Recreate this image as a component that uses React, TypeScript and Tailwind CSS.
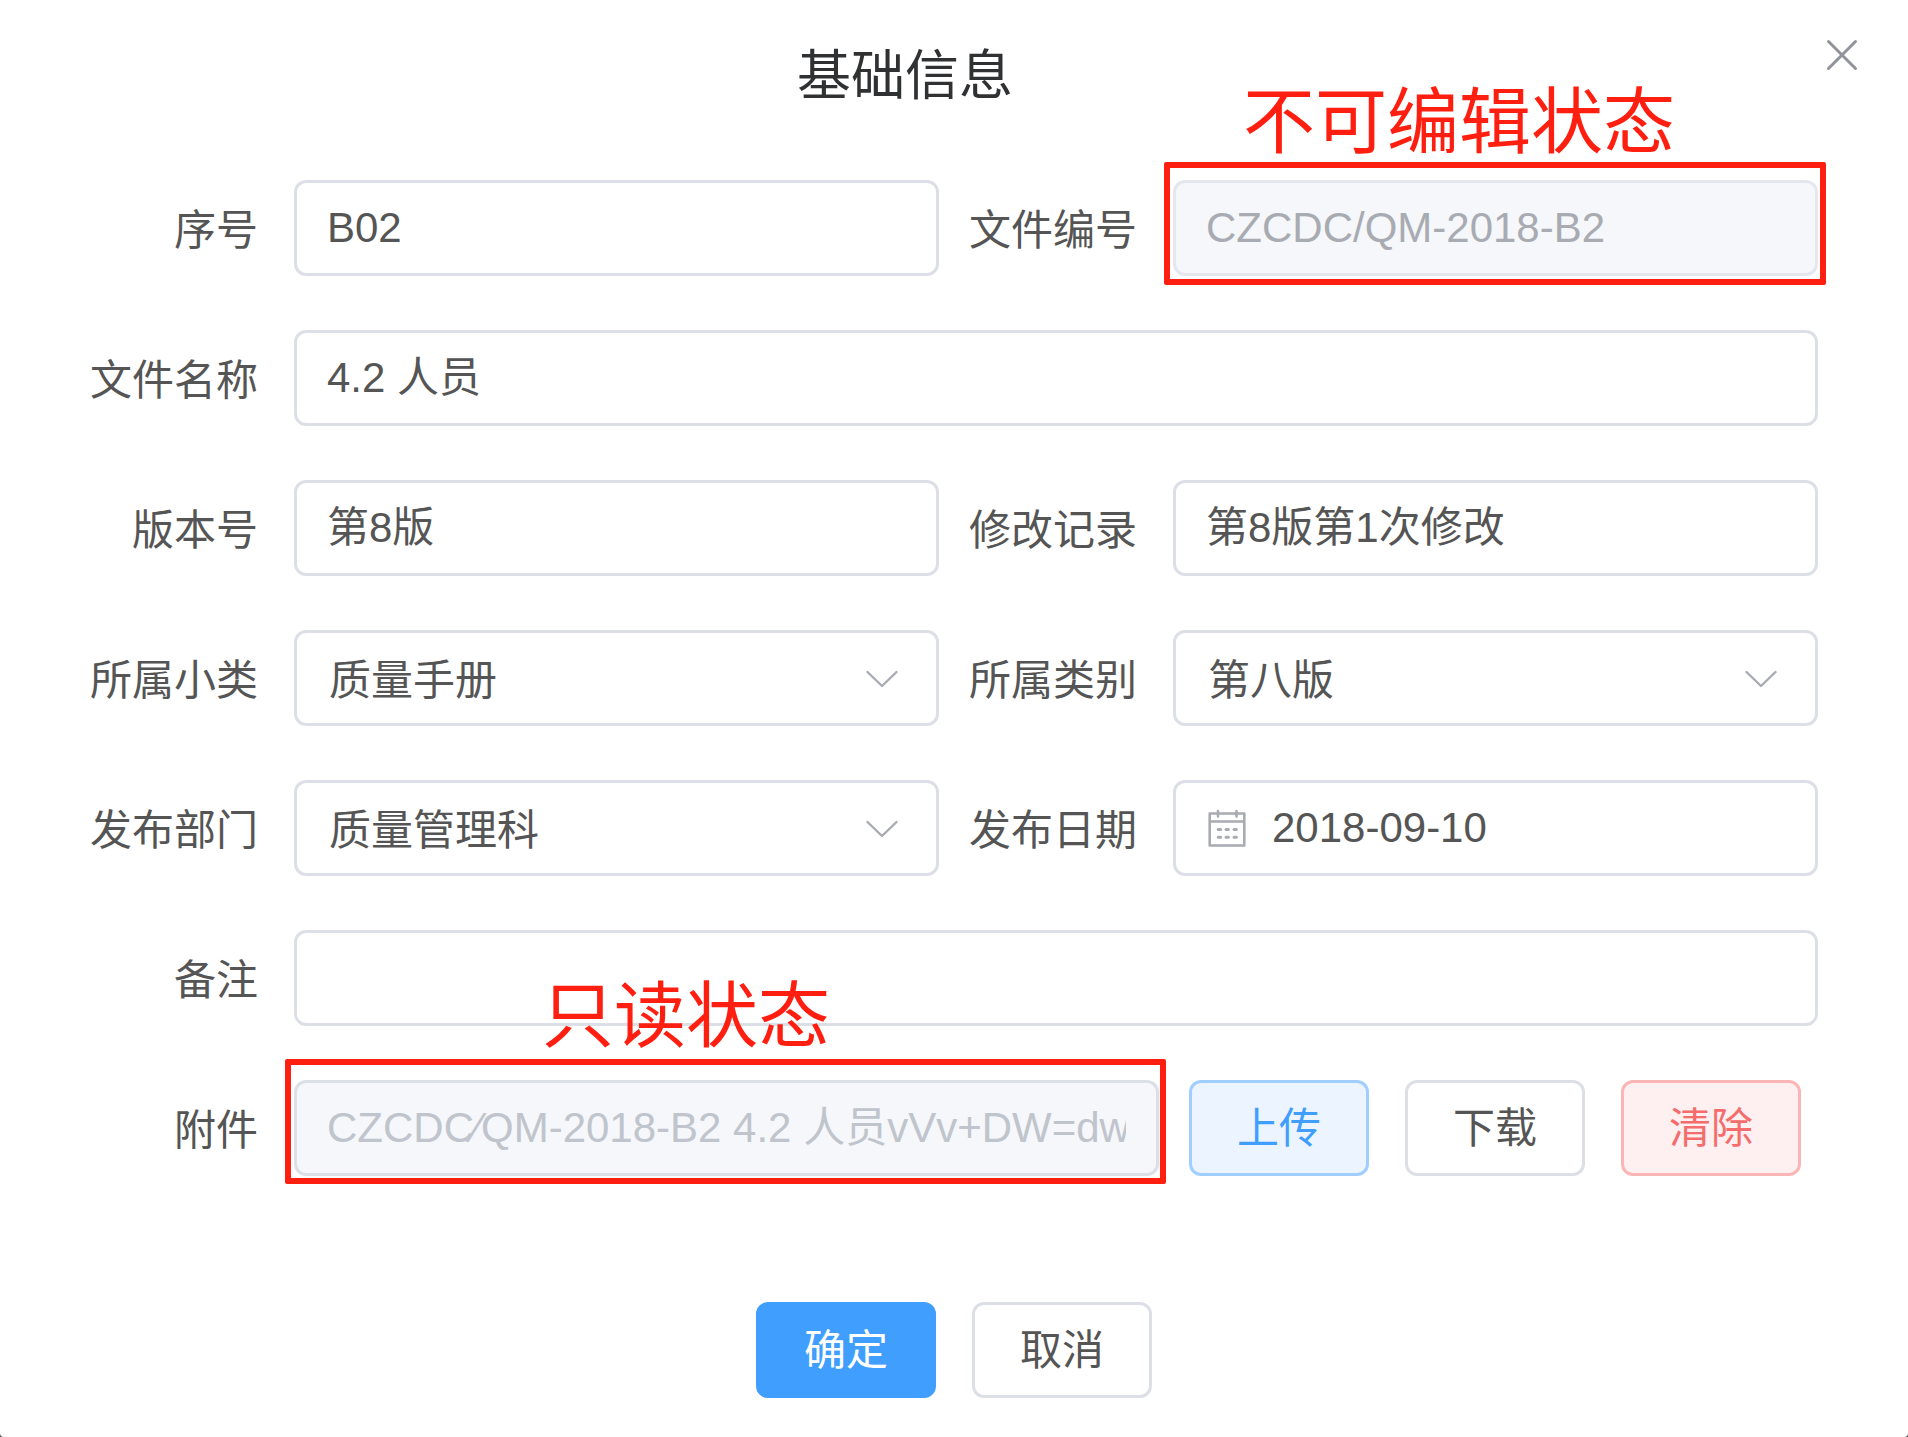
import { useState } from 'react';
import type { ReactNode } from 'react';
import clsx from 'clsx';

const controlClass =
  'h-24 w-full min-w-0 appearance-none rounded-xl border-3 border-[#dcdfe6] bg-white px-[30px] text-[42px] text-[#555555] outline-none focus:border-[#409eff]';

const CloseIcon = () => (
  <svg viewBox="0 0 32 32" className="h-8 w-8" fill="none" stroke="currentColor" strokeWidth="3" strokeLinecap="round">
    <path d="M2.5 2.5 29.5 29.5M29.5 2.5 2.5 29.5" />
  </svg>
);

const ChevronIcon = () => (
  <svg
    viewBox="0 0 32 18"
    className="pointer-events-none absolute top-10 right-[41px] h-[18px] w-8 text-[#a8abb2]"
    fill="none"
    stroke="currentColor"
    strokeWidth="2.4"
    strokeLinecap="round"
    strokeLinejoin="round"
  >
    <path d="M1.5 2 16 16 30.5 2" />
  </svg>
);

const CalendarIcon = () => (
  <svg
    viewBox="0 0 38 38"
    className="pointer-events-none absolute top-[29px] left-[35px] h-[38px] w-[38px] text-[#a8abb2]"
    fill="none"
    stroke="currentColor"
    strokeWidth="2.6"
    strokeLinecap="round"
    strokeLinejoin="round"
  >
    <path d="M1.7 4.5H36.3V36.5H1.7ZM1.7 12.5H36.3M10 2V7.5M28.5 2V7.5" />
    <path d="M10.2 20.5h2.4M18 20.5h2.4M26 20.5h2.4M10.2 28.3h2.4M18 28.3h2.4M26 28.3h2.4" strokeWidth="3" />
  </svg>
);

interface FieldProps {
  id: string;
  label: string;
  wide?: boolean;
  children: ReactNode;
}

const Field = ({ id, label, wide, children }: FieldProps) => (
  <div className={clsx('flex items-center', wide && 'col-span-2')}>
    <label htmlFor={id} className="w-[234px] shrink-0 pt-1 pr-9 text-right text-[42px] whitespace-nowrap">
      {label}
    </label>
    <div className="relative flex min-w-0 flex-1 items-center">{children}</div>
  </div>
);

interface SelectBoxProps {
  id: string;
  options: string[];
}

const SelectBox = ({ id, options }: SelectBoxProps) => (
  <>
    <select id={id} className={clsx(controlClass, 'pt-1 pl-8')}>
      {options.map((option) => (
        <option key={option}>{option}</option>
      ))}
    </select>
    <ChevronIcon />
  </>
);

const buttonStyles = {
  plain: 'border-[#dcdfe6] bg-white text-[#555555]',
  primary: 'border-[#409eff] bg-[#409eff] text-white',
  light: 'border-[#a0cfff] bg-[#ecf5ff] text-[#409eff]',
  danger: 'border-[#fab6b6] bg-[#fef0f0] text-[#f56c6c]',
};

interface ButtonProps {
  kind?: keyof typeof buttonStyles;
  children: ReactNode;
}

const Button = ({ kind = 'plain', children }: ButtonProps) => (
  <button
    type="button"
    className={clsx('h-24 w-[180px] shrink-0 rounded-xl border-3 text-[42px]', buttonStyles[kind])}
  >
    {children}
  </button>
);

const App = () => {
  const [form, setForm] = useState({
    serial: 'B02',
    name: '4.2 人员',
    version: '第8版',
    changes: '第8版第1次修改',
    date: '2018-09-10',
    remark: '',
  });

  const bind = (key: keyof typeof form) => ({
    id: key,
    type: 'text',
    value: form[key],
    onChange: (e: React.ChangeEvent<HTMLInputElement>) => setForm({ ...form, [key]: e.target.value }),
  });

  return (
    <div className="min-h-screen bg-[#555555]">
      <div
        role="dialog"
        aria-labelledby="dialog-title"
        className="min-h-screen rounded-b-sm bg-white pb-9 font-['Liberation_Sans','Noto_Sans_CJK_SC',sans-serif] text-[#555555]"
      >
        <header className="flex h-[180px] items-start">
          <h1 id="dialog-title" className="flex-1 pt-[38px] text-center text-[54px] leading-[76px] text-[#303133]">
            基础信息
          </h1>
          <button type="button" aria-label="关闭" className="mt-[39px] mr-[50px] ml-4 text-[#909399]">
            <CloseIcon />
          </button>
        </header>

        <form className="grid grid-cols-2 gap-y-[54px] pr-[90px] pl-[60px]">
          <Field id="serial" label="序号">
            <input {...bind('serial')} className={controlClass} />
          </Field>
          <Field id="code" label="文件编号">
            <input
              id="code"
              type="text"
              disabled
              value="CZCDC/QM-2018-B2"
              className="h-24 w-full min-w-0 rounded-xl border-3 border-[#e4e7ed] bg-[#f5f7fa] px-[30px] text-[42px] text-[#a8abb2]"
            />
            <div className="pointer-events-none absolute -top-[18px] -right-2 -bottom-[9px] -left-[9px] rounded-xs border-6 border-[#ff1f10]" />
            <span className="absolute bottom-full left-[70px] mb-[14px] text-[72px] leading-[88px] whitespace-nowrap text-[#ff1f10]">
              不可编辑状态
            </span>
          </Field>

          <Field id="name" label="文件名称" wide>
            <input {...bind('name')} className={clsx(controlClass, 'pb-[10px]')} />
          </Field>

          <Field id="version" label="版本号">
            <input {...bind('version')} className={clsx(controlClass, 'pb-[10px]')} />
          </Field>
          <Field id="changes" label="修改记录">
            <input {...bind('changes')} className={clsx(controlClass, 'pb-[10px]')} />
          </Field>

          <Field id="subclass" label="所属小类">
            <SelectBox id="subclass" options={['质量手册', '程序文件']} />
          </Field>
          <Field id="category" label="所属类别">
            <SelectBox id="category" options={['第八版', '第七版']} />
          </Field>

          <Field id="department" label="发布部门">
            <SelectBox id="department" options={['质量管理科', '办公室']} />
          </Field>
          <Field id="date" label="发布日期">
            <input {...bind('date')} className={clsx(controlClass, 'pl-24')} />
            <CalendarIcon />
          </Field>

          <Field id="remark" label="备注" wide>
            <input {...bind('remark')} className={controlClass} />
          </Field>

          <Field id="attachment" label="附件" wide>
            <div className="relative mr-[30px] min-w-0 flex-1">
              <input
                id="attachment"
                type="text"
                readOnly
                value="CZCDC⁄QM-2018-B2 4.2 人员vVv+DW=dwd"
                className="block h-24 w-full rounded-xl border-3 border-[#dcdfe6] bg-[#f5f7fa] px-[30px] pb-[10px] text-[42px] text-[#c0c4cc]"
              />
              <div className="pointer-events-none absolute -top-[21px] -right-[7px] -bottom-2 -left-[9px] rounded-xs border-6 border-[#ff1f10]" />
              <span className="absolute bottom-full left-[248px] mb-5 text-[72px] leading-[88px] whitespace-nowrap text-[#ff1f10]">
                只读状态
              </span>
            </div>
            <div className="flex gap-9 pr-[17px]">
              <Button kind="light">上传</Button>
              <Button>下载</Button>
              <Button kind="danger">清除</Button>
            </div>
          </Field>
        </form>

        <footer className="mt-[126px] flex justify-center gap-9">
          <Button kind="primary">确定</Button>
          <Button>取消</Button>
        </footer>
      </div>
    </div>
  );
};

export default App;
